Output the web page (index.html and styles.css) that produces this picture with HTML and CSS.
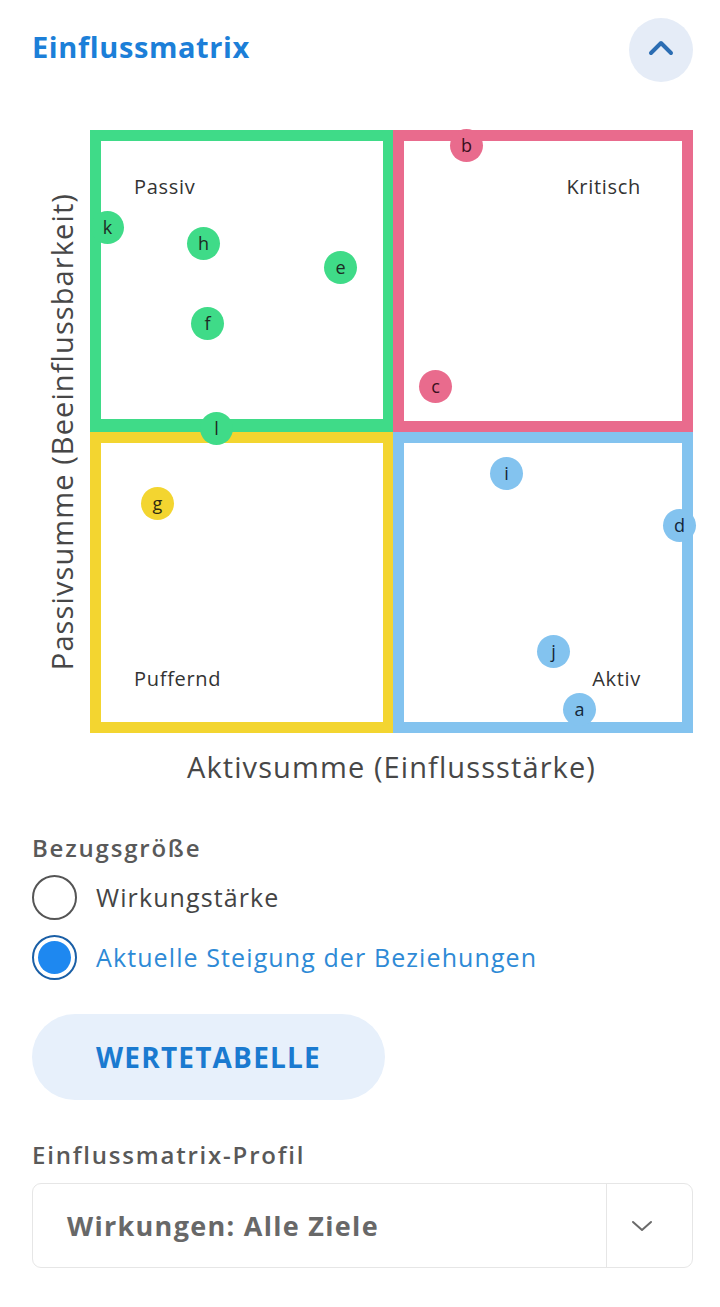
FILE: index.html
```html
<!DOCTYPE html>
<html lang="de">
<head>
<meta charset="utf-8">
<title>Einflussmatrix</title>
<link rel="stylesheet" href="styles.css">
</head>
<body>
<main class="panel">
  <header class="head">
    <h1 class="title">Einflussmatrix</h1>
    <button class="collapse" aria-label="Einklappen">
      <svg width="26" height="16" viewBox="0 0 26 16"><path d="M3 13 L13 3 L23 13" fill="none" stroke="#2b6db3" stroke-width="4" stroke-linecap="round" stroke-linejoin="round"/></svg>
    </button>
  </header>

  <section class="chart">
    <div class="ylabel"><span>Passivsumme (Beeinflussbarkeit)</span></div>
    <div class="plot">
      <div class="quad q-passiv"><span class="qlabel">Passiv</span></div>
      <div class="quad q-kritisch"><span class="qlabel">Kritisch</span></div>
      <div class="quad q-puffernd"><span class="qlabel">Puffernd</span></div>
      <div class="quad q-aktiv"><span class="qlabel">Aktiv</span></div>

      <span class="dot green" style="left:17px;top:97px">k</span>
      <span class="dot green" style="left:113px;top:113px">h</span>
      <span class="dot green" style="left:250px;top:137px">e</span>
      <span class="dot green" style="left:117px;top:193px">f</span>
      <span class="dot green" style="left:126px;top:298px">l</span>
      <span class="dot pink" style="left:376px;top:15px">b</span>
      <span class="dot pink" style="left:345px;top:256px">c</span>
      <span class="dot yellow" style="left:67px;top:373px">g</span>
      <span class="dot blue" style="left:416px;top:343px">i</span>
      <span class="dot blue" style="left:589px;top:395px">d</span>
      <span class="dot blue" style="left:463px;top:521px">j</span>
      <span class="dot blue" style="left:489px;top:579px">a</span>
    </div>
    <div class="xlabel">Aktivsumme (Einflussstärke)</div>
  </section>

  <section class="group">
    <div class="field-label">Bezugsgröße</div>
    <label class="radio-row">
      <span class="radio"></span>
      <span class="radio-text">Wirkungstärke</span>
    </label>
    <label class="radio-row selected">
      <span class="radio"><span class="radio-dot"></span></span>
      <span class="radio-text">Aktuelle Steigung der Beziehungen</span>
    </label>
  </section>

  <button class="table-btn">WERTETABELLE</button>

  <section class="profile">
    <div class="field-label">Einflussmatrix-Profil</div>
    <div class="select">
      <span class="select-value">Wirkungen: Alle Ziele</span>
      <span class="select-arrow">
        <svg width="24" height="14" viewBox="0 0 24 14"><path d="M3 3 L12 11 L21 3" fill="none" stroke="#6a6a6a" stroke-width="2" stroke-linecap="round" stroke-linejoin="round"/></svg>
      </span>
    </div>
  </section>
</main>
</body>
</html>
```

FILE: styles.css
```css
* { box-sizing: border-box; }

html, body {
  margin: 0;
  padding: 0;
  background: #ffffff;
}

body {
  font-family: "Open Sans", "Noto Sans", sans-serif;
  color: #444;
}

.panel {
  width: 720px;
  padding: 18px 27px 0 32px;
}

.head {
  display: flex;
  align-items: center;
  justify-content: space-between;
  height: 64px;
}

.title {
  margin: 0;
  font-family: "Open Sans", sans-serif;
  font-weight: 700;
  font-size: 29px;
  letter-spacing: 0.6px;
  color: #1c7fd8;
  margin-top: -8px;
}

.collapse {
  width: 64px;
  height: 64px;
  border-radius: 50%;
  border: none;
  background: #e5ecf7;
  display: flex;
  align-items: center;
  justify-content: center;
  padding: 0 0 4px 0;
}

.chart {
  margin-top: 48px;
  display: grid;
  grid-template-columns: 58px 603px;
  grid-template-rows: 603px auto;
}

.ylabel {
  grid-row: 1;
  grid-column: 1;
  display: flex;
  align-items: center;
  justify-content: center;
}

.ylabel span {
  writing-mode: vertical-rl;
  transform: rotate(180deg);
  font-size: 29px;
  color: #474747;
  white-space: nowrap;
  letter-spacing: 1.1px;
}

.plot {
  grid-row: 1;
  grid-column: 2;
  position: relative;
  display: grid;
  grid-template-columns: 303px 300px;
  grid-template-rows: 302px 301px;
}

.quad {
  border: 11px solid;
  display: flex;
  padding: 36px 33px;
  font-size: 20px;
  letter-spacing: 0.7px;
  color: #333;
}

.qlabel { line-height: 20px; }

.q-passiv { border-color: #3fdb88; border-right-width: 10px; border-bottom-width: 13px; }
.q-kritisch { border-color: #e96b8d; justify-content: flex-end; padding-right: 41px; }
.q-puffernd { border-color: #f3d530; align-items: flex-end; border-right-width: 10px; padding-bottom: 33px; }
.q-aktiv { border-color: #83c3ef; justify-content: flex-end; align-items: flex-end; padding-right: 41px; padding-bottom: 33px; }

.dot {
  position: absolute;
  width: 33px;
  height: 33px;
  margin: -16px 0 0 -16px;
  border-radius: 50%;
  display: flex;
  align-items: center;
  justify-content: center;
  font-size: 18px;
  line-height: 1;
  color: #1d2b24;
  padding-bottom: 2px;
}

.dot.green { background: #3fdb88; }
.dot.pink { background: #e96b8d; color: #3a1020; }
.dot.yellow { background: #f3d530; color: #2e2a10; }
.dot.blue { background: #83c3ef; color: #14283a; }

.xlabel {
  grid-row: 2;
  grid-column: 2;
  text-align: center;
  font-size: 29px;
  line-height: 32px;
  margin-top: 18px;
  color: #474747;
  letter-spacing: 1.1px;
}

.group { margin-top: 50px; }

.field-label {
  font-family: "Open Sans", sans-serif;
  font-weight: 600;
  font-size: 24px;
  line-height: 30px;
  color: #595959;
  letter-spacing: 1.8px;
}

.radio-row {
  display: flex;
  align-items: center;
  height: 60px;
  gap: 19px;
}

.group .field-label { margin-bottom: 4px; }

.radio {
  width: 45px;
  height: 45px;
  border-radius: 50%;
  border: 2px solid #555;
  display: flex;
  align-items: center;
  justify-content: center;
  flex: none;
}

.radio-text {
  font-size: 25px;
  color: #444;
  letter-spacing: 1.1px;
}

.selected .radio { border-color: #1a5fa6; }
.radio-dot {
  width: 33px;
  height: 33px;
  border-radius: 50%;
  background: #1e88f0;
}
.selected .radio-text { color: #2e8ad6; }

.table-btn {
  display: block;
  margin-top: 27px;
  width: 353px;
  height: 86px;
  border: none;
  border-radius: 43px;
  background: #e7f0fb;
  font-family: "Open Sans", sans-serif;
  font-weight: 700;
  font-size: 28px;
  letter-spacing: 1.2px;
  color: #1a7ad0;
}

.profile { margin-top: 40px; }

.select {
  margin-top: 13px;
  height: 85px;
  border: 1.5px solid #e6e6e6;
  border-radius: 9px;
  display: flex;
  align-items: stretch;
}

.select-value {
  flex: 1;
  display: flex;
  align-items: center;
  padding-left: 34px;
  font-weight: 700;
  font-size: 27px;
  letter-spacing: 1.3px;
  color: #686868;
  border-right: 1.5px solid #e6e6e6;
}

.select-arrow {
  width: 85px;
  display: flex;
  align-items: center;
  justify-content: center;
  padding-right: 15px;
}
```
